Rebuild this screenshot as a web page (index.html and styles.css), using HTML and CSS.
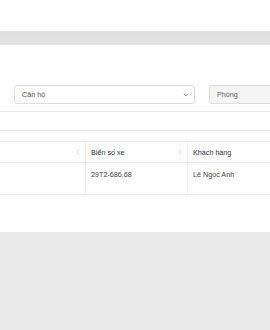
FILE: index.html
```html
<!DOCTYPE html>
<html>
<head>
<meta charset="utf-8">
<link rel="stylesheet" href="styles.css">
</head>
<body>
<div class="top"></div>
<div class="bar"></div>
<div class="panel">
  <div class="filters">
    <div class="select">
      <span>Căn hộ</span>
      <svg class="chev" width="6" height="4" viewBox="0 0 6 4"><path d="M0.8 0.8 L3 3 L5.2 0.8" fill="none" stroke="#999" stroke-width="0.8"/></svg>
    </div>
    <div class="select disabled"><span>Phòng</span></div>
  </div>
  <div class="sep"></div>
  <div class="sep2"></div>
  <div class="table">
    <div class="row head">
      <div class="cell c1"><span class="sort"><svg width="4" height="6" viewBox="0 0 4 6"><path d="M0.5 2.3 L2 0.8 L3.5 2.3 Z M0.5 3.7 L2 5.2 L3.5 3.7 Z" fill="#d0d0d0"/></svg></span></div>
      <div class="cell c2">Biển số xe<span class="sort"><svg width="4" height="6" viewBox="0 0 4 6"><path d="M0.5 2.3 L2 0.8 L3.5 2.3 Z M0.5 3.7 L2 5.2 L3.5 3.7 Z" fill="#d0d0d0"/></svg></span></div>
      <div class="cell c3">Khách hàng</div>
    </div>
    <div class="row body">
      <div class="cell c1"></div>
      <div class="cell c2">29T2-686.68</div>
      <div class="cell c3">Lê Ngọc Anh</div>
    </div>
  </div>
</div>
</body>
</html>
```
FILE: styles.css
```css
html, body {
  margin: 0;
  padding: 0;
}
body {
  background: #e9e9e9;
  font-family: "Liberation Sans", Arial, sans-serif;
  font-size: 7.2px;
  color: #444;
  width: 270px;
  overflow: hidden;
}
.top {
  height: 31px;
  background: #ffffff;
}
.bar {
  height: 14px;
  background: linear-gradient(#dedede, #e5e5e5);
  border-bottom: 1px solid #ececec;
  box-sizing: border-box;
}
.panel {
  background: #ffffff;
  height: 187px;
  padding-top: 40px;
  box-sizing: border-box;
  box-shadow: 0 2px 6px rgba(0, 0, 0, 0.08);
  position: relative;
}
.filters {
  display: flex;
  gap: 14px;
  padding-left: 14px;
  overflow: hidden;
}
.select {
  width: 181px;
  height: 19px;
  box-sizing: border-box;
  border: 1px solid #dcdcdc;
  border-radius: 3px;
  display: flex;
  align-items: center;
  justify-content: space-between;
  padding: 0 5px 0 7px;
  color: #555;
  flex-shrink: 0;
}
.select.disabled {
  width: 80px;
  background: #f5f5f5;
  color: #666;
}
.chev {
  display: block;
}
.sep {
  margin-top: 7px;
  border-top: 1px solid #ebebeb;
}
.sep2 {
  margin-top: 18px;
  border-top: 1px solid #ebebeb;
}
.table {
  margin-top: 10px;
  border-top: 1px solid #ececec;
}
.row {
  display: grid;
  grid-template-columns: 86px 102px 1fr;
  border-bottom: 1px solid #ececec;
  box-sizing: border-box;
}
.head {
  height: 21px;
}
.body {
  height: 32px;
}
.cell {
  border-right: 1px solid #ececec;
  padding: 0 0 0 5px;
  display: flex;
  align-items: center;
  justify-content: space-between;
  color: #444;
}
.c3 {
  border-right: none;
}
.head .cell {
  color: #333;
}
.body .cell {
  align-items: flex-start;
  padding-top: 7px;
  color: #444;
}
.sort {
  display: flex;
  margin-right: 5px;
}
.c1 {
  justify-content: flex-end;
}
```
